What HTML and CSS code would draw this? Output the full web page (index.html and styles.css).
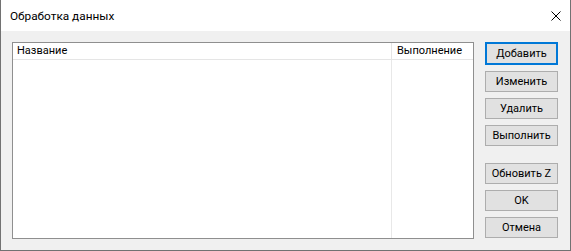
FILE: index.html
```html
<!DOCTYPE html>
<html lang="ru">
<head>
<meta charset="UTF-8" />
<title>Обработка данных</title>
<link rel="stylesheet" href="styles.css">
</head>
<body>
  <div class="window">
    <div class="titlebar">
      <span class="title">Обработка данных</span>
      <svg class="close" width="10" height="10" viewBox="0 0 10 10">
        <path d="M0.5 0.5 L9.5 9.5 M9.5 0.5 L0.5 9.5" stroke="#000" stroke-width="1" fill="none" />
      </svg>
    </div>

    <div class="content">
      <div class="list">
        <div class="list-head">
          <div class="col-name">Название</div>
          <div class="col-run">Выполнение</div>
        </div>
        <div class="list-body">
          <div class="col-name"></div>
          <div class="col-run"></div>
        </div>
      </div>

      <div class="buttons">
        <button class="btn default">Добавить</button>
        <button class="btn">Изменить</button>
        <button class="btn">Удалить</button>
        <button class="btn">Выполнить</button>
        <button class="btn sep">Обновить Z</button>
        <button class="btn">OK</button>
        <button class="btn">Отмена</button>
      </div>
    </div>
  </div>
</body>
</html>
```

FILE: styles.css
```css
body, html {
  margin: 0; padding: 0;
  background: #f0f0f0;
  font-family: Roboto, "Noto Sans", sans-serif;
  font-size: 11px;
}
.window {
  width: 571px;
  height: 251px;
  box-sizing: border-box;
  border: 1px solid #727272;
  border-top: none;
  background: #f0f0f0;
  display: flex;
  flex-direction: column;
}
.titlebar {
  height: 31px;
  background: #fff;
  display: flex;
  align-items: center;
  padding-left: 9px;
  padding-right: 9px;
  justify-content: space-between;
}
.title {
  color: #000;
  font-size: 11.8px;
  margin-top: 1px;
}
.close {
  display: block;
}
.content {
  display: flex;
  padding: 11px 0 0 11px;
}
.list {
  width: 462px;
  height: 197px;
  box-sizing: border-box;
  border: 1px solid #8f8f8f;
  background: #fff;
  display: flex;
  flex-direction: column;
}
.list-head {
  display: flex;
  height: 16px;
  border-bottom: 1px solid #e5e5e5;
  line-height: 16px;
  color: #000;
}
.list-head .col-name {
  width: 374px;
  padding-left: 4px;
  border-right: 1px solid #e5e5e5;
}
.list-head .col-run {
  padding-left: 5px;
}
.list-body {
  flex: 1;
  display: flex;
}
.list-body .col-name {
  width: 378px;
  border-right: 1px solid #e8e8e8;
}
.buttons {
  display: flex;
  flex-direction: column;
  gap: 6px;
  margin-left: 11px;
}
.btn {
  width: 73px;
  height: 21px;
  padding: 0;
  box-sizing: border-box;
  background: #e1e1e1;
  border: 1px solid #adadad;
  font-family: Roboto, "Noto Sans", sans-serif;
  font-size: 11px;
  color: #000;
}
.btn.default {
  height: 23px;
  border: 2px solid #0078d7;
}
.btn.sep {
  margin-top: 11px;
}
```
